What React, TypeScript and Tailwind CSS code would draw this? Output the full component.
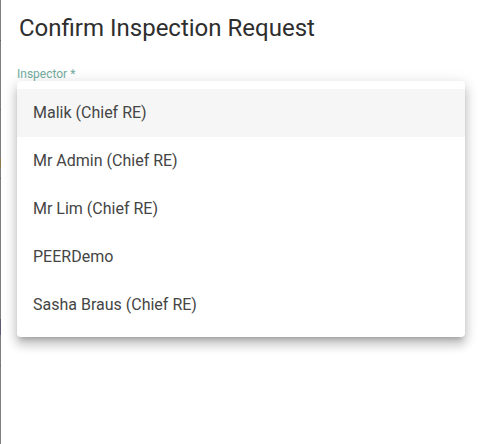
import React from "react";

const App = () => {
  const inspectors = [
    "Malik (Chief RE)",
    "Mr Admin (Chief RE)",
    "Mr Lim (Chief RE)",
    "PEERDemo",
    "Sasha Braus (Chief RE)",
  ];

  return (
    <div
      className="flex h-[444px] w-[478px] overflow-hidden bg-white"
      style={{ fontFamily: "Roboto, 'Liberation Sans', sans-serif" }}
    >
      {/* backdrop edge */}
      <div className="flex w-px shrink-0 flex-col bg-[#7d7d7d]">
        <div className="h-[40px]" />
        <div className="h-px bg-[#5e5e5e]" />
        <div className="h-[68px]" />
        <div className="h-px bg-[#6a6a6a]" />
        <div className="h-[48px]" />
        <div className="h-[10px] bg-[#8b7b4f]" />
        <div className="h-[10px]" />
        <div className="h-px bg-[#5e5e5e]" />
        <div className="h-[140px]" />
        <div className="h-[16px] bg-[#5b5b78]" />
        <div className="h-[30px]" />
        <div className="h-px bg-[#6a6a6a]" />
      </div>

      {/* dialog */}
      <div className="relative flex-1 bg-white">
        <div className="pl-[18px] pt-[12px] text-[24px] leading-[32px] text-[#2e2e2e]">
          Confirm Inspection Request
        </div>
        <div className="pl-[16px] pt-[23px] text-[12px] leading-[14px] text-[#72ab9e]">
          Inspector *
        </div>

        {/* select menu */}
        <div className="absolute left-[16px] top-[81px] w-[448px] rounded-[4px] bg-white py-2 shadow-[0_5px_5px_-3px_rgba(0,0,0,0.2),0_8px_10px_1px_rgba(0,0,0,0.14),0_3px_14px_2px_rgba(0,0,0,0.12)]">
          {inspectors.map((name, i) => (
            <div
              key={name}
              className={`flex h-[48px] items-center px-4 text-[16px] text-[#454545] ${
                i === 0 ? "bg-[#f6f6f6]" : ""
              }`}
            >
              {name}
            </div>
          ))}
        </div>
      </div>
    </div>
  );
};

export default App;
